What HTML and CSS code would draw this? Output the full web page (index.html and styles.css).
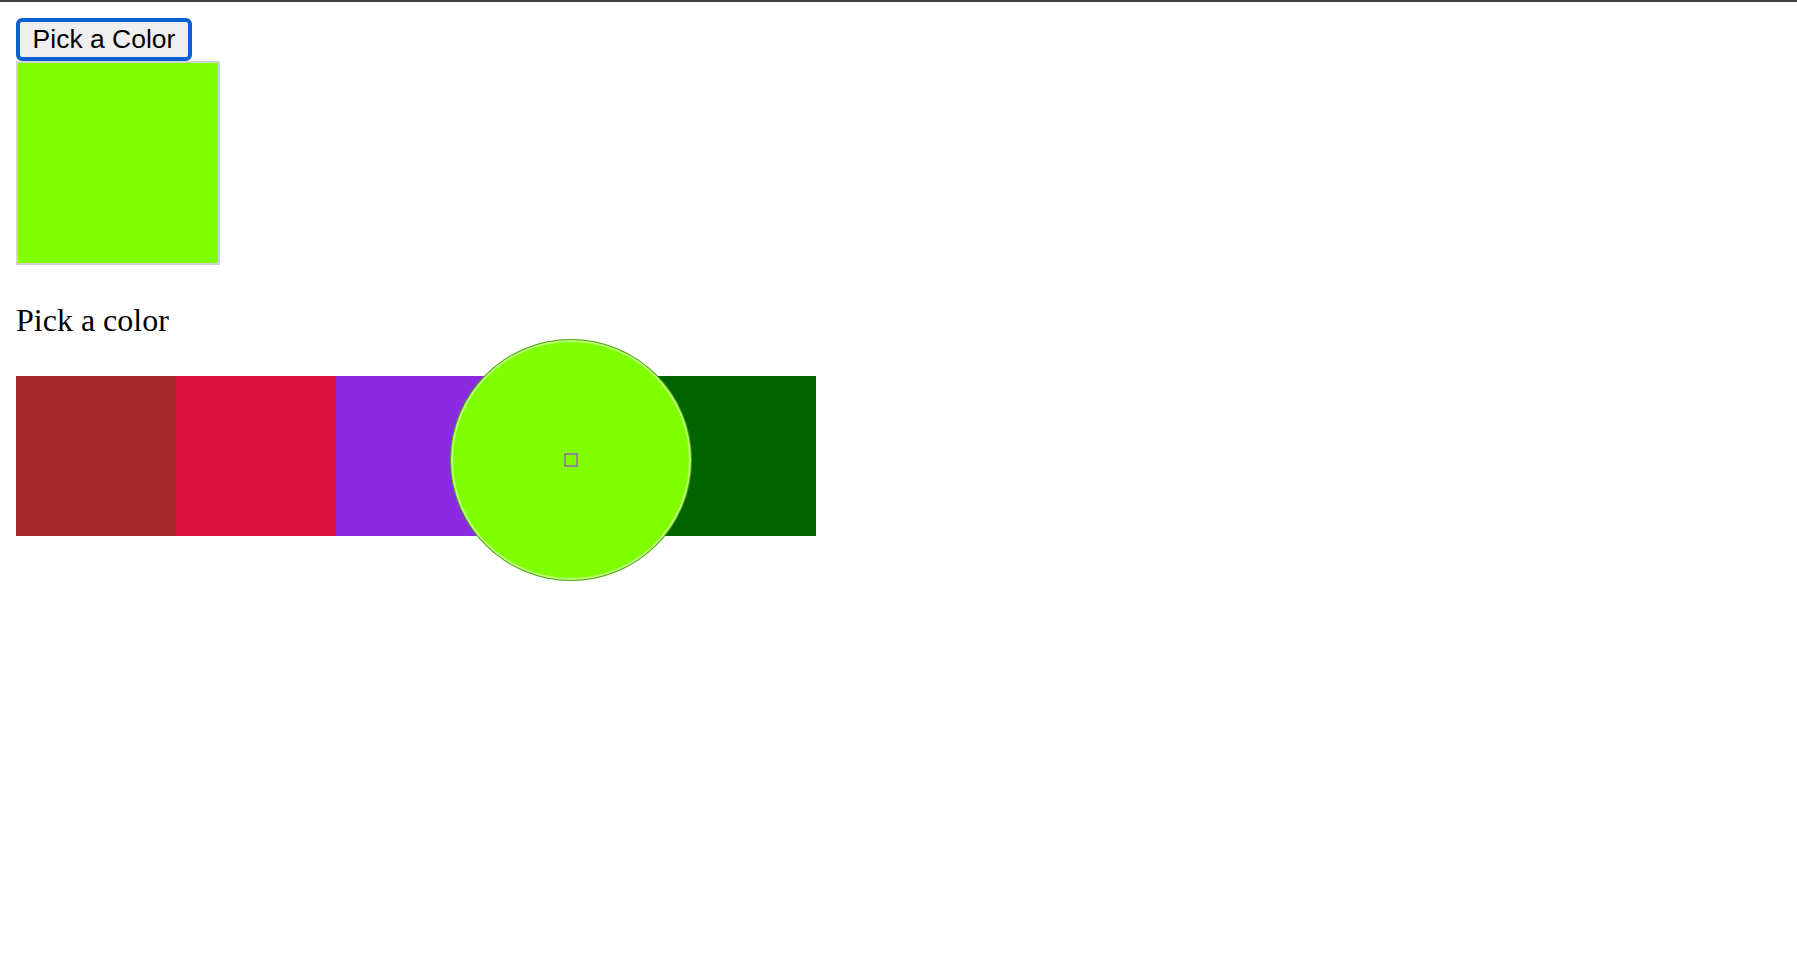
FILE: index.html
```html
<!DOCTYPE html>
<html lang="en">
<head>
<meta charset="utf-8">
<title>Pick a Color</title>
<link rel="stylesheet" href="styles.css">
</head>
<body>
<div class="topline"></div>
<main class="page">
  <button class="pick-btn" type="button">Pick a Color</button>
  <div class="preview"></div>
  <p class="label">Pick a color</p>
  <div class="swatches">
    <div class="swatch brown"></div>
    <div class="swatch crimson"></div>
    <div class="swatch violet"></div>
    <div class="swatch chartreuse"></div>
    <div class="swatch darkgreen"></div>
  </div>
  <div class="loupe"><span class="loupe-target"></span></div>
</main>
</body>
</html>
```

FILE: styles.css
```css
html, body {
  margin: 0;
  padding: 0;
  background: #ffffff;
}

.topline {
  height: 2px;
  background: #3e3e3e;
}

.page {
  position: relative;
  display: flex;
  flex-direction: column;
  align-items: flex-start;
  padding: 16px 16px 120px 16px;
}

.pick-btn {
  box-sizing: border-box;
  width: 176px;
  height: 43px;
  padding: 0;
  margin: 0;
  border: 4px solid #0a62d0;
  border-radius: 6px;
  background: #efefef;
  color: #000;
  font-family: "Liberation Sans", Arial, sans-serif;
  font-size: 26.5px;
  line-height: 1;
  text-align: center;
}

.preview {
  box-sizing: border-box;
  width: 204px;
  height: 204px;
  margin-top: 0;
  border: 2px solid #d2d2d2;
  background: #7fff00;
}

.label {
  margin: 37px 0 0 0;
  font-family: "Liberation Serif", "Times New Roman", serif;
  font-size: 32px;
  line-height: 36px;
  color: #000;
}

.swatches {
  display: flex;
  margin-top: 38px;
}

.swatch {
  width: 160px;
  height: 160px;
}

.brown { background: #a52a2a; }
.crimson { background: #dc143c; }
.violet { background: #8a2be2; }
.chartreuse { background: #7fff00; }
.darkgreen { background: #006400; }

.loupe {
  position: absolute;
  left: 450px;
  top: 337px;
  box-sizing: border-box;
  width: 242px;
  height: 242px;
  border-radius: 50%;
  background: #7fff00;
  border: 1px solid rgba(70, 150, 30, 0.85);
  box-shadow: inset 0 0 0 2px rgba(210, 255, 170, 0.7);
  display: flex;
  align-items: center;
  justify-content: center;
  z-index: 2;
}

.loupe-target {
  box-sizing: border-box;
  width: 14px;
  height: 14px;
  border: 2px solid #8c8c8c;
}
```
